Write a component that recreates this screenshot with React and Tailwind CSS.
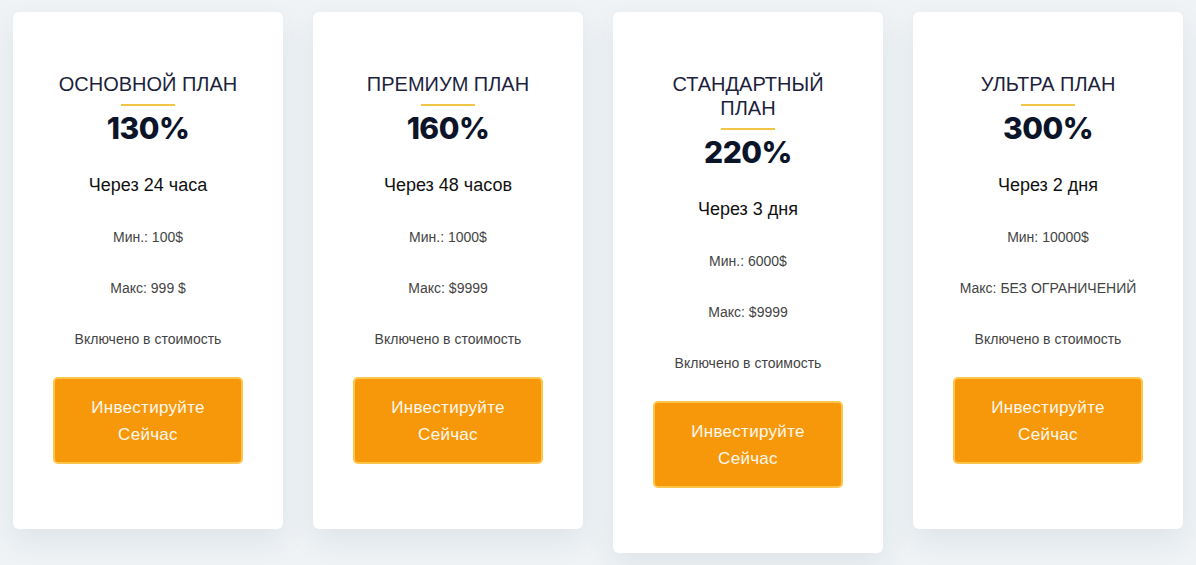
import React from 'react';

const PLANS = [
  { title: 'Основной план', rate: '130%', term: 'Через 24 часа', min: 'Мин.: 100$', max: 'Макс: 999 $' },
  { title: 'Премиум план', rate: '160%', term: 'Через 48 часов', min: 'Мин.: 1000$', max: 'Макс: $9999' },
  { title: 'Стандартный план', rate: '220%', term: 'Через 3 дня', min: 'Мин.: 6000$', max: 'Макс: $9999' },
  { title: 'Ультра план', rate: '300%', term: 'Через 2 дня', min: 'Мин: 10000$', max: 'Макс: БЕЗ ОГРАНИЧЕНИЙ' },
];

function PlanCard({ plan }) {
  return (
    <div className="w-[270px] bg-white rounded-md shadow-[0_12px_30px_rgba(30,50,70,0.08)] flex flex-col items-center pt-[60px] pb-[65px] px-[35px] text-center">
      <h3 className="text-[20px] leading-[24px] uppercase text-[#1d1f3d] font-['Liberation_Sans',Arial,sans-serif]">
        {plan.title}
      </h3>
      <div className="mt-[8px] w-[54px] h-[2px] bg-[#f3c544]" />
      <div className="mt-[4px] text-[30px] leading-[36px] font-extrabold tracking-[-0.5px] text-[#0c1429] font-['Inter',sans-serif]">
        {plan.rate}
      </div>
      <p className="mt-[27px] text-[18px] leading-[24px] text-[#111] font-['Liberation_Sans',Arial,sans-serif]">
        {plan.term}
      </p>
      <p className="mt-[30px] text-[14px] leading-[20px] text-[#444] font-['Liberation_Sans',Arial,sans-serif]">
        {plan.min}
      </p>
      <p className="mt-[31px] text-[14px] leading-[20px] text-[#444] font-['Liberation_Sans',Arial,sans-serif]">
        {plan.max}
      </p>
      <p className="mt-[31px] text-[14px] leading-[20px] text-[#444] font-['Liberation_Sans',Arial,sans-serif]">
        Включено в стоимость
      </p>
      <button className="mt-[28px] w-[190px] h-[87px] rounded-[5px] bg-[#f7980b] border-2 border-[#fcc64d] text-[#fff8ee] text-[17px] leading-[27px] tracking-[0.3px] font-['Liberation_Sans',Arial,sans-serif] px-2">
        Инвестируйте<br />Сейчас
      </button>
    </div>
  );
}

export default function App() {
  return (
    <div className="min-h-[565px] bg-[#eff3f6] pl-[13px] pt-[12px]">
      <div className="flex items-start gap-[30px]">
        {PLANS.map((p) => (
          <PlanCard key={p.title} plan={p} />
        ))}
      </div>
    </div>
  );
}
